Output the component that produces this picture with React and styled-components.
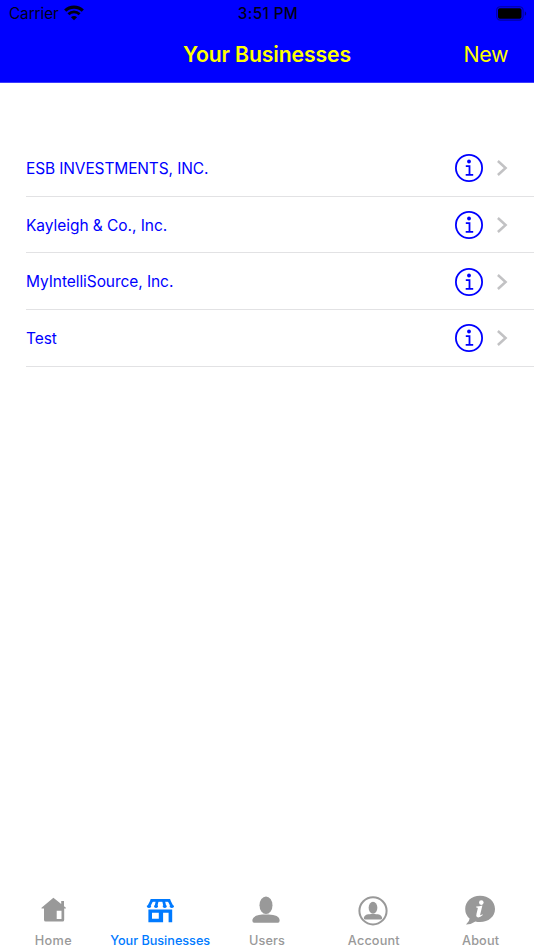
import React from "react";
import styled, { createGlobalStyle } from "styled-components";

const Global = createGlobalStyle`
  * { box-sizing: border-box; }
  body { margin: 0; background: #fff; }
`;

const Screen = styled.div`
  width: 534px;
  height: 950px;
  display: flex;
  flex-direction: column;
  overflow: hidden;
  background: #fff;
  font-family: Inter, "Liberation Sans", sans-serif;
  white-space: nowrap;
`;

const Header = styled.header`
  height: 83px;
  flex: none;
  background: #0000ff;
  border-bottom: 1px solid #3c3cff;
`;

const StatusBar = styled.div`
  height: 28px;
  padding: 0 7px 0 9px;
  display: grid;
  grid-template-columns: 1fr auto 1fr;
  align-items: center;
  color: #000014;
  font-size: 15.3px;
  line-height: 28px;
`;

const Carrier = styled.div`
  display: flex;
  align-items: center;
  gap: 5px;
  letter-spacing: -0.05px;
  svg { margin-top: -2px; }
`;

const Time = styled.div`
  font-weight: 500;
  letter-spacing: 0.35px;
`;

const BatterySlot = styled.div`
  display: flex;
  justify-content: flex-end;
  svg { margin-top: -2px; }
`;

const NavBar = styled.div`
  height: 53px;
  padding: 0 26px;
  display: grid;
  grid-template-columns: 1fr auto 1fr;
  align-items: center;
  color: #ffff00;
  font-size: 21.4px;
  line-height: 53px;
`;

const Title = styled.h1`
  grid-column: 2;
  margin: 0;
  font-size: 21.2px;
  font-weight: 600;
  letter-spacing: -0.12px;
`;

const NewButton = styled.button`
  justify-self: end;
  padding: 0;
  border: 0;
  background: none;
  color: inherit;
  font: inherit;
  letter-spacing: -0.4px;
`;

const List = styled.ul`
  flex: 1;
  margin: 0;
  padding: 57px 0 0 26px;
  list-style: none;
`;

const Row = styled.li`
  height: 56.67px;
  padding: 1px 25px 0 0;
  display: flex;
  align-items: center;
  border-bottom: 1px solid #e2e2e4;
  color: #0000ff;
  font-size: 15.5px;
  line-height: 20px;
`;

const Name = styled.span`
  flex: 1;
  padding-top: 1.2px;
  letter-spacing: ${(p) => p.$spacing}px;
`;

const Info = styled.svg`
  margin-right: 11px;
`;

const TabBar = styled.nav`
  height: 62px;
  flex: none;
  display: grid;
  grid-template-columns: repeat(5, 1fr);
`;

const Tab = styled.div`
  display: flex;
  flex-direction: column;
  align-items: center;
  color: ${(p) => (p.$active ? "#007aff" : "#999999")};
  font-size: 12.7px;
  font-weight: 500;
  line-height: 16px;
  svg { margin: 4px 1px 7px 0; flex: none; }
`;

const TabLabel = styled.span`
  letter-spacing: ${(p) => p.$spacing}px;
`;

const WifiIcon = () => (
  <svg width="20" height="16" viewBox="0 0 20 16" fill="none" stroke="#000014">
    <path d="M1.2 5.7C6 .9 14 .9 18.8 5.7" strokeWidth="3.1" />
    <path d="M4.4 9.2C7.5 6.2 12.5 6.2 15.6 9.2" strokeWidth="2.7" />
    <path d="M10 15.3 6.9 12.2C8.6 10.6 11.4 10.6 13.1 12.2Z" fill="#000014" stroke="none" />
  </svg>
);

const BatteryIcon = () => (
  <svg width="31" height="15" viewBox="0 0 31 15">
    <rect x=".7" y=".7" width="26.4" height="13.4" rx="3.6" fill="none" stroke="#0000a0" strokeWidth="1.1" />
    <rect x="2" y="2.2" width="23.5" height="10.5" rx="1.8" fill="#000000" />
    <path d="M28.8 5.2C30.7 6 30.7 9 28.8 9.8Z" fill="#00008c" />
  </svg>
);

const InfoIcon = () => (
  <Info width="30" height="30" viewBox="0 0 30 30" fill="none" stroke="#0000ff" strokeWidth="1.8">
    <circle cx="15" cy="15" r="13.1" />
    <circle cx="15" cy="8.5" r="1.9" fill="#0000ff" stroke="none" />
    <path d="M11.8 13.2H15.5V22M11.7 21.9H19.2" />
  </Info>
);

const Chevron = () => (
  <svg width="14" height="18" viewBox="0 0 14 18" fill="none" stroke="#c2c2c4" strokeWidth="2.5">
    <path d="M2.9 2 10.6 9 2.9 16" />
  </svg>
);

const TabIcon = ({ children }) => (
  <svg width="34" height="34" viewBox="0 0 34 34" fill="currentColor">{children}</svg>
);

const HomeIcon = () => (
  <TabIcon>
    <path fillRule="evenodd" d="M17.4 5.8 25.2 12V9H28V14.2L29.9 15.8V16.5H28.2V27.7Q28.2 29.6 26.4 29.6H9.7Q8 29.6 8 27.7V16.5H5.5V15.8ZM20.7 18.7V27H25.5V18.7Z" />
  </TabIcon>
);

const StoreIcon = () => (
  <TabIcon>
    <path d="M7.6 7H27.2V9.8H7.6Z" />
    <g fill="none" stroke="currentColor" strokeWidth="2.8">
      <path d="M9 8.2 5.8 14.4M25.8 8.2 29 14.4" />
      <path d="M14.3 8.5 13 14.2M20.5 8.5 21.8 14.2" />
    </g>
    <path d="M3.9 13.5H8.1V15Q6 17 3.9 15ZM11.1 13.5H15V15Q13 17 11.1 15ZM19.8 13.5H23.7V15Q21.8 17 19.8 15ZM26.7 13.5H30.9V15Q28.8 17 26.7 15Z" />
    <path fillRule="evenodd" d="M5.4 17.6H29.2V30.2H25.6V20.8H20.1V30.2H5.4ZM9 20.8V26.8H15.8V20.8Z" />
  </TabIcon>
);

const UserShape = () => (
  <>
    <ellipse cx="17" cy="13.2" rx="6.5" ry="8.8" />
    <path d="M3.5 27.6C4.5 23.4 10 22.6 17 22.6S29.5 23.4 30.5 27.6Q31 30.8 29 30.8H5Q3 30.8 3.5 27.6Z" />
  </>
);

const UsersIcon = () => <TabIcon><UserShape /></TabIcon>;

const AccountIcon = () => (
  <TabIcon>
    <circle cx="17" cy="18.8" r="13.6" fill="none" stroke="currentColor" strokeWidth="2" />
    <g transform="translate(5.6 6.9) scale(.67)"><UserShape /></g>
  </TabIcon>
);

const AboutIcon = () => (
  <TabIcon>
    <path d="M17 3.8C25.8 3.8 32 9.5 32 17S25.5 30.1 17 30.1Q14.5 30.1 12.4 29.4Q7.8 32.6 3 32.5Q6.6 29.6 6.6 26.6Q2.2 22.8 2.2 17C2.2 9.5 8.5 3.8 17 3.8Z" />
    <circle cx="18.3" cy="10.6" r="2.3" fill="#fff" />
    <path fill="#fff" d="M13.2 14.5Q16 14.3 19.4 13.5L17.2 22.5Q16.8 24.2 19.3 22.3L19.8 23Q16 26.4 14 25Q12.8 24.2 13.5 21.7L14.8 16.5Q15.1 15.4 13.2 15.4Z" />
  </TabIcon>
);

const businesses = [
  { name: "ESB INVESTMENTS, INC.", spacing: -0.13 },
  { name: "Kayleigh & Co., Inc.", spacing: -0.05 },
  { name: "MyIntelliSource, Inc.", spacing: -0.07 },
  { name: "Test", spacing: -0.1 },
];

const tabs = [
  { label: "Home", Icon: HomeIcon, spacing: 0.35 },
  { label: "Your Businesses", Icon: StoreIcon, active: true, spacing: -0.03 },
  { label: "Users", Icon: UsersIcon, spacing: 0.15 },
  { label: "Account", Icon: AccountIcon, spacing: 0.15 },
  { label: "About", Icon: AboutIcon, spacing: 0.15 },
];

export default function App() {
  return (
    <>
      <Global />
      <Screen>
        <Header>
          <StatusBar>
            <Carrier>Carrier <WifiIcon /></Carrier>
            <Time>3:51 PM</Time>
            <BatterySlot><BatteryIcon /></BatterySlot>
          </StatusBar>
          <NavBar>
            <Title>Your Businesses</Title>
            <NewButton>New</NewButton>
          </NavBar>
        </Header>
        <List>
          {businesses.map(({ name, spacing }) => (
            <Row key={name}>
              <Name $spacing={spacing}>{name}</Name>
              <InfoIcon />
              <Chevron />
            </Row>
          ))}
        </List>
        <TabBar>
          {tabs.map(({ label, Icon, active, spacing }) => (
            <Tab key={label} $active={active}>
              <Icon />
              <TabLabel $spacing={spacing}>{label}</TabLabel>
            </Tab>
          ))}
        </TabBar>
      </Screen>
    </>
  );
}
